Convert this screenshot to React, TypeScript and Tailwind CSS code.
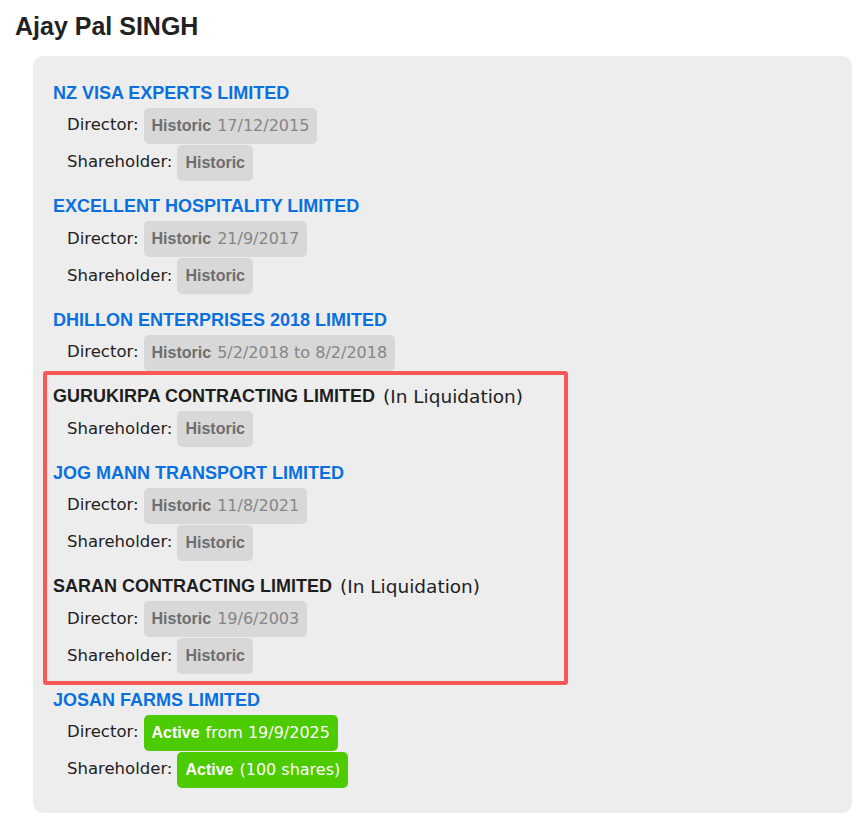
import React from 'react';

type Role = {
  label: string;
  status: 'Historic' | 'Active';
  detail?: string;
};

type Company = {
  name: string;
  link: boolean;
  note?: string;
  roles: Role[];
};

const companies: Company[] = [
  {
    name: 'NZ VISA EXPERTS LIMITED',
    link: true,
    roles: [
      { label: 'Director:', status: 'Historic', detail: '17/12/2015' },
      { label: 'Shareholder:', status: 'Historic' },
    ],
  },
  {
    name: 'EXCELLENT HOSPITALITY LIMITED',
    link: true,
    roles: [
      { label: 'Director:', status: 'Historic', detail: '21/9/2017' },
      { label: 'Shareholder:', status: 'Historic' },
    ],
  },
  {
    name: 'DHILLON ENTERPRISES 2018 LIMITED',
    link: true,
    roles: [{ label: 'Director:', status: 'Historic', detail: '5/2/2018 to 8/2/2018' }],
  },
];

// companies inside the red highlight
const flagged: Company[] = [
  {
    name: 'GURUKIRPA CONTRACTING LIMITED',
    link: false,
    note: '(In Liquidation)',
    roles: [{ label: 'Shareholder:', status: 'Historic' }],
  },
  {
    name: 'JOG MANN TRANSPORT LIMITED',
    link: true,
    roles: [
      { label: 'Director:', status: 'Historic', detail: '11/8/2021' },
      { label: 'Shareholder:', status: 'Historic' },
    ],
  },
  {
    name: 'SARAN CONTRACTING LIMITED',
    link: false,
    note: '(In Liquidation)',
    roles: [
      { label: 'Director:', status: 'Historic', detail: '19/6/2003' },
      { label: 'Shareholder:', status: 'Historic' },
    ],
  },
];

const last: Company = {
  name: 'JOSAN FARMS LIMITED',
  link: true,
  roles: [
    { label: 'Director:', status: 'Active', detail: 'from 19/9/2025' },
    { label: 'Shareholder:', status: 'Active', detail: '(100 shares)' },
  ],
};

const bold = "font-['Liberation_Sans',Arial,sans-serif] font-bold";
const body = "font-['DejaVu_Sans',sans-serif]";

function Badge({ status, detail }: { status: Role['status']; detail?: string }) {
  const active = status === 'Active';
  return (
    <span
      className={`inline-flex h-[36px] items-center rounded-[5px] px-2 text-[16px] ${
        active ? 'bg-[#4ccb00] text-white' : 'bg-[#d8d8d8] text-[#868686]'
      }`}
    >
      <span className={`${bold} ${active ? 'text-white' : 'text-[#6e6e6e]'}`}>{status}</span>
      {detail && <span className={`${body} ml-[6px]`}>{detail}</span>}
    </span>
  );
}

function CompanyBlock({ c, className = '' }: { c: Company; className?: string }) {
  return (
    <div className={`flex flex-col ${className}`}>
      <div className="h-[26px] flex items-center whitespace-nowrap">
        <span
          className={`${bold} text-[18px] ${
            c.link ? 'text-[#0a70df] cursor-pointer' : 'text-[#1e1e1e]'
          }`}
        >
          {c.name}
        </span>
        {c.note && (
          <span className={`${body} text-[18.5px] text-[#222] ml-[8px]`}>{c.note}</span>
        )}
      </div>
      <div className="mt-[1.5px] flex flex-col">
        {c.roles.map((r) => (
          <div key={r.label} className="h-[37px] flex items-start pl-[14px]">
            <span
              className={`${body} text-[16.5px] text-[#222] h-[36px] flex items-center mr-[5px]`}
            >
              {r.label}
            </span>
            <Badge status={r.status} detail={r.detail} />
          </div>
        ))}
      </div>
    </div>
  );
}

export default function App() {
  return (
    <div className="bg-white w-[861px] h-[821px] overflow-hidden">
      <h2 className={`${bold} text-[25px] text-[#222] leading-[30px] pl-[15px] pt-[11px]`}>
        Ajay Pal SINGH
      </h2>

      <div className="mt-[15px] ml-[33px] w-[819px] rounded-[10px] bg-[#ededed] pt-[24px] pb-[12px] pl-[20px] flex flex-col">
        {companies.map((c) => (
          <CompanyBlock key={c.name} c={c} className="mb-[12px]" />
        ))}

        <div className="relative flex flex-col">
          <div className="pointer-events-none absolute left-[-10px] top-[-13px] bottom-[2px] w-[525px] rounded-[3px] border-4 border-[#fb5757]" />
          {flagged.map((c) => (
            <CompanyBlock key={c.name} c={c} className="mb-[12px]" />
          ))}
        </div>

        <CompanyBlock c={last} className="mb-[12px]" />
      </div>
    </div>
  );
}
